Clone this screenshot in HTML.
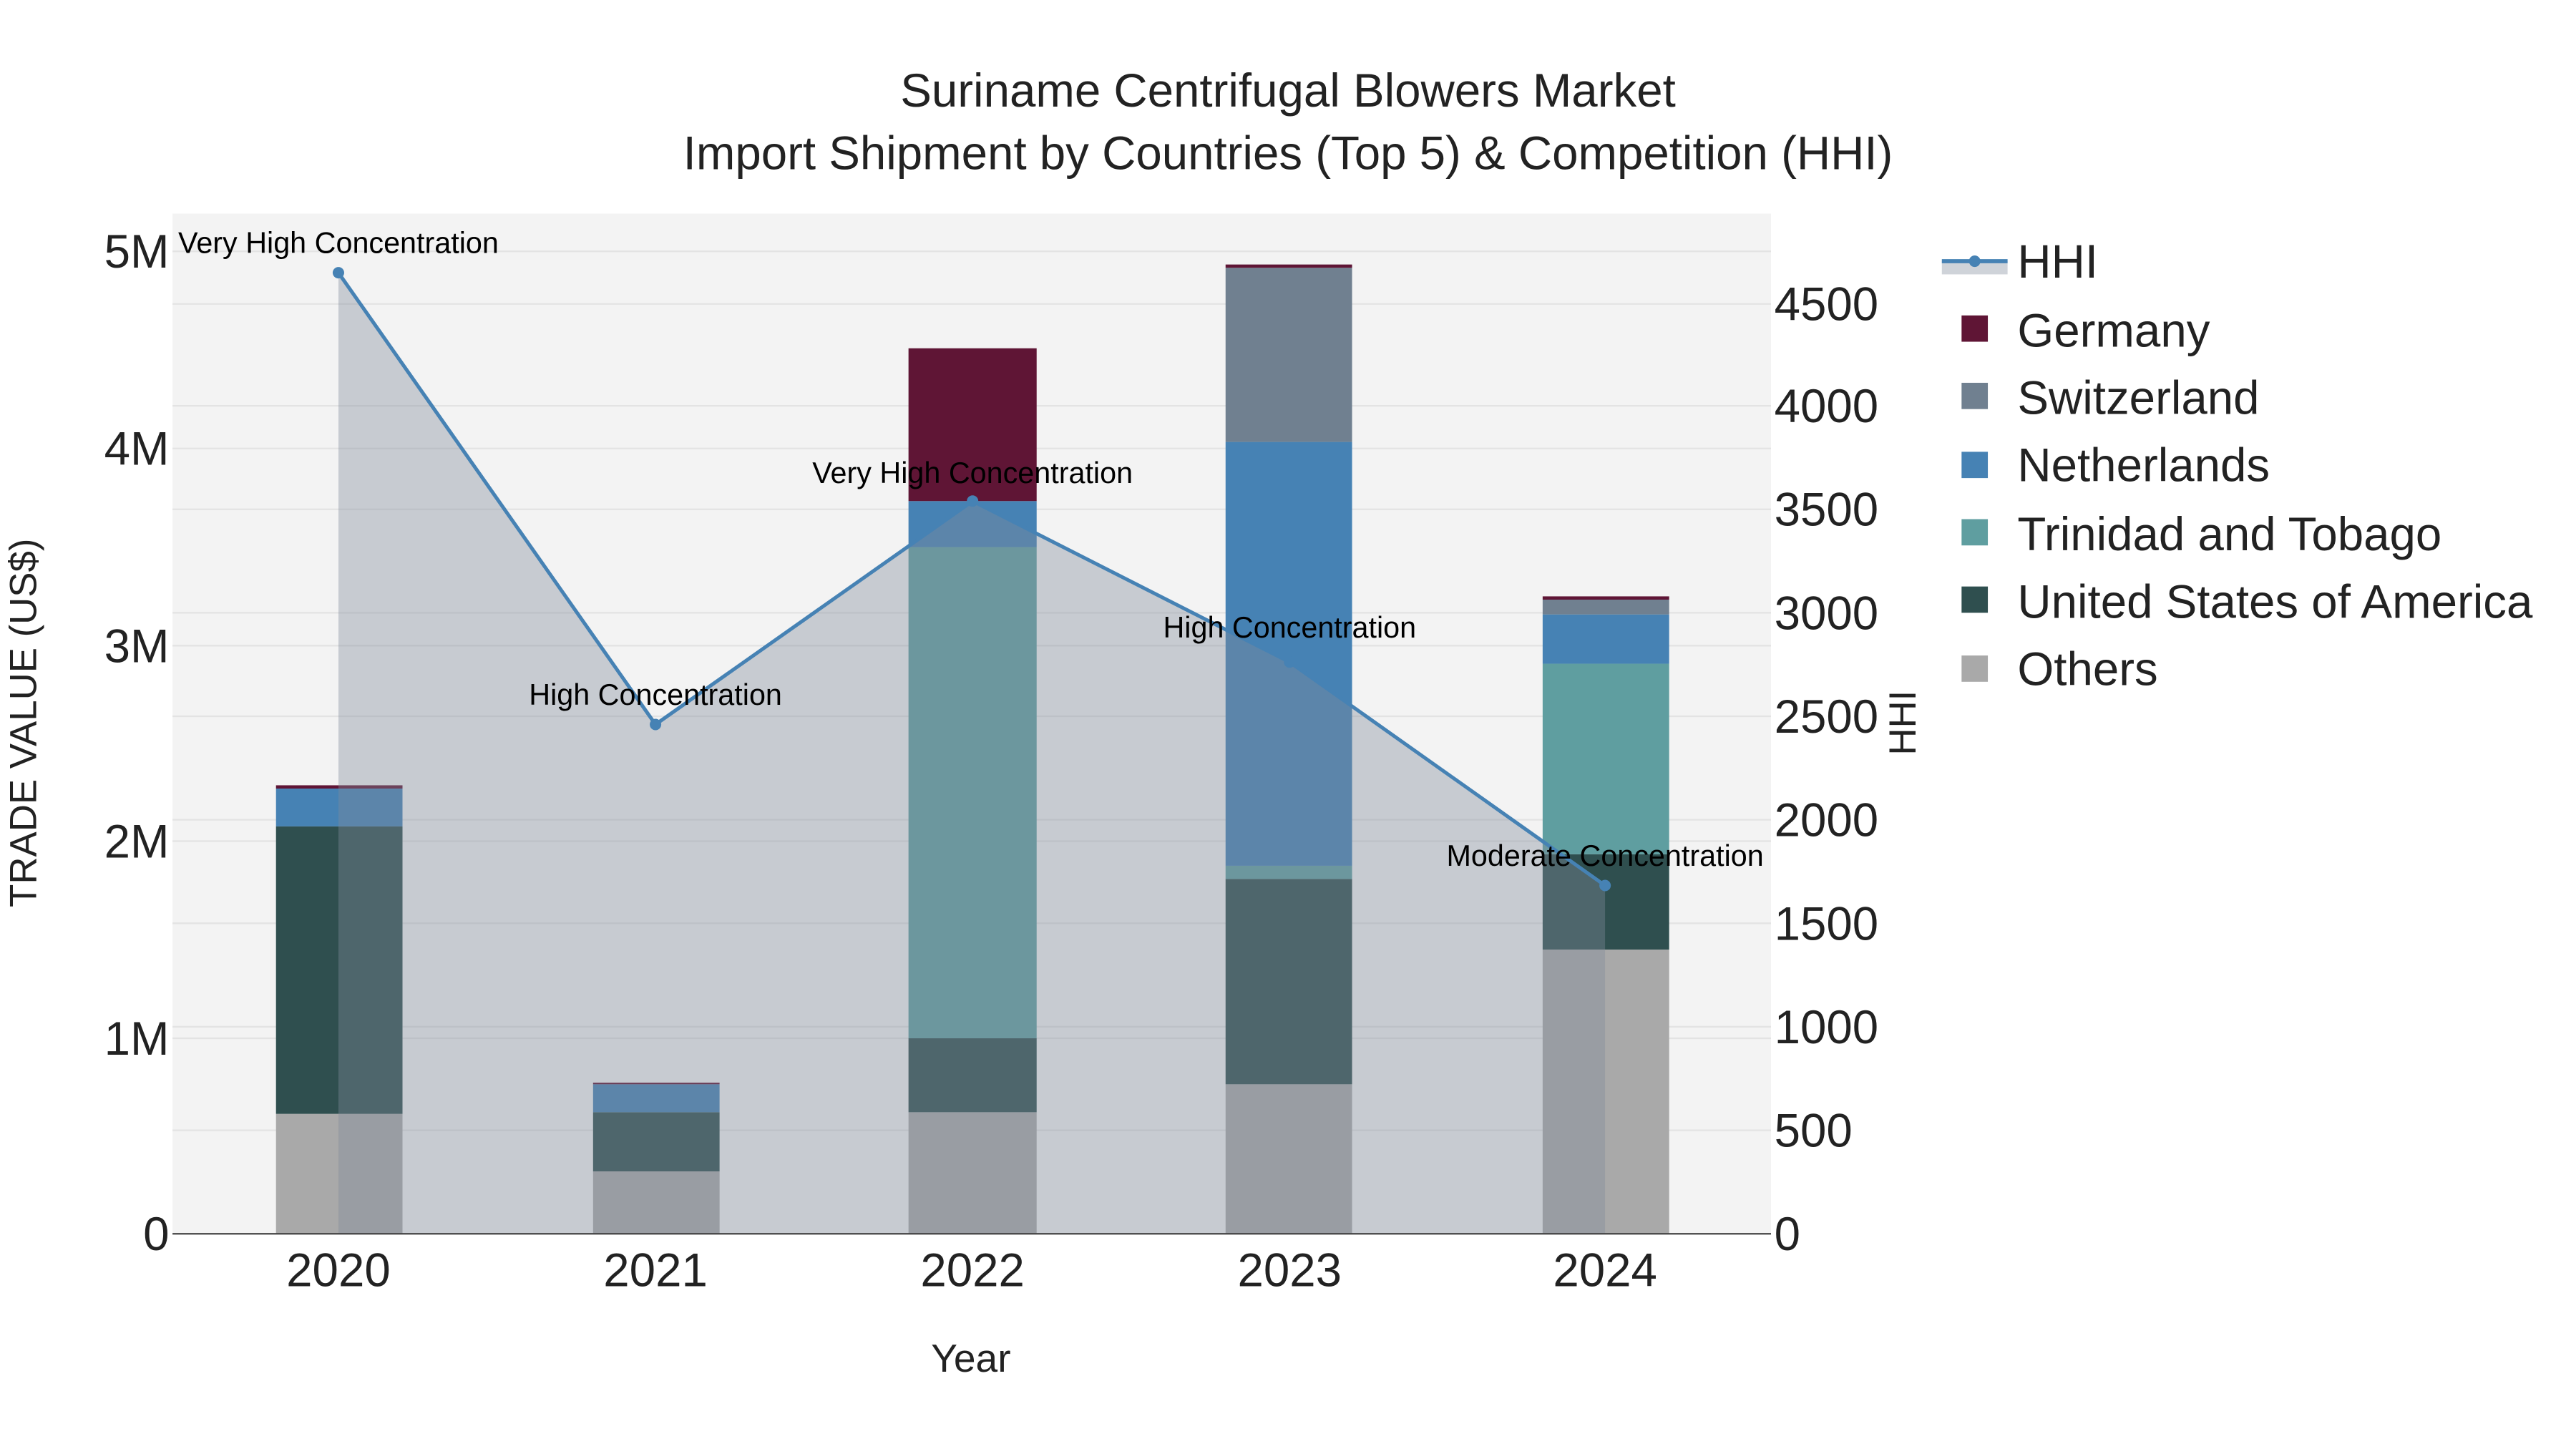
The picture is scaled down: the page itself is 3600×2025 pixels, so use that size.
<!DOCTYPE html>
<html><head><meta charset="utf-8"><style>html,body{margin:0;padding:0;background:#fff;}svg{display:block}</style></head>
<body>
<svg width="3600" height="2025" viewBox="0 0 1568 882" xmlns="http://www.w3.org/2000/svg" font-family="Liberation Sans, sans-serif">
<rect x="0" y="0" width="1568" height="882" fill="#fff"/>
<rect x="105" y="130" width="973" height="621" fill="#f3f3f3"/>
<g stroke="#e3e3e3" stroke-width="1">
<line x1="105" x2="1078" y1="632" y2="632"/><line x1="105" x2="1078" y1="512" y2="512"/><line x1="105" x2="1078" y1="393" y2="393"/><line x1="105" x2="1078" y1="273" y2="273"/><line x1="105" x2="1078" y1="153" y2="153"/>
<line x1="105" x2="1078" y1="688" y2="688"/><line x1="105" x2="1078" y1="625" y2="625"/><line x1="105" x2="1078" y1="562" y2="562"/><line x1="105" x2="1078" y1="499" y2="499"/><line x1="105" x2="1078" y1="436" y2="436"/><line x1="105" x2="1078" y1="373" y2="373"/><line x1="105" x2="1078" y1="310" y2="310"/><line x1="105" x2="1078" y1="247" y2="247"/><line x1="105" x2="1078" y1="185" y2="185"/>
</g>
<g>
<rect x="168" y="678" width="77" height="73" fill="#a9a9a9"/><rect x="168" y="503" width="77" height="175" fill="#2f4f4f"/><rect x="168" y="480" width="77" height="23" fill="#4682b4"/><rect x="168" y="478" width="77" height="2" fill="#5f1535"/>
<rect x="361" y="713" width="77" height="38" fill="#a9a9a9"/><rect x="361" y="677" width="77" height="36" fill="#2f4f4f"/><rect x="361" y="660" width="77" height="17" fill="#4682b4"/><rect x="361" y="659" width="77" height="1" fill="#5f1535"/>
<rect x="553" y="677" width="78" height="74" fill="#a9a9a9"/><rect x="553" y="632" width="78" height="45" fill="#2f4f4f"/><rect x="553" y="333" width="78" height="299" fill="#5f9ea0"/><rect x="553" y="305" width="78" height="28" fill="#4682b4"/><rect x="553" y="212" width="78" height="93" fill="#5f1535"/>
<rect x="746" y="660" width="77" height="91" fill="#a9a9a9"/><rect x="746" y="535" width="77" height="125" fill="#2f4f4f"/><rect x="746" y="527" width="77" height="8" fill="#5f9ea0"/><rect x="746" y="269" width="77" height="258" fill="#4682b4"/><rect x="746" y="163" width="77" height="106" fill="#708090"/><rect x="746" y="161" width="77" height="2" fill="#5f1535"/>
<rect x="939" y="578" width="77" height="173" fill="#a9a9a9"/><rect x="939" y="520" width="77" height="58" fill="#2f4f4f"/><rect x="939" y="404" width="77" height="116" fill="#5f9ea0"/><rect x="939" y="374" width="77" height="30" fill="#4682b4"/><rect x="939" y="365" width="77" height="9" fill="#708090"/><rect x="939" y="363" width="77" height="2" fill="#5f1535"/>
</g>
<polygon points="206,166 399,441 592,305 785,403 977,539 977,751 206,751" fill="rgb(130,140,155)" fill-opacity="0.38"/>
<polyline points="206,166 399,441 592,305 785,403 977,539" fill="none" stroke="#4682b4" stroke-width="2.2"/>
<g fill="#4682b4"><circle cx="206" cy="166" r="3.5"/><circle cx="399" cy="441" r="3.5"/><circle cx="592" cy="305" r="3.5"/><circle cx="785" cy="403" r="3.5"/><circle cx="977" cy="539" r="3.5"/></g>
<line x1="105" x2="1078" y1="751" y2="751" stroke="#444" stroke-width="1"/>
<g font-size="18" fill="#000" text-anchor="middle">
<text x="206" y="154">Very High Concentration</text>
<text x="399" y="429">High Concentration</text>
<text x="592" y="294">Very High Concentration</text>
<text x="785" y="388">High Concentration</text>
<text x="977" y="527">Moderate Concentration</text>
</g>
<g font-size="28.5" fill="#222" text-anchor="end">
<text x="103" y="761">0</text><text x="103" y="642">1M</text><text x="103" y="522">2M</text><text x="103" y="403">3M</text><text x="103" y="283">4M</text><text x="103" y="163">5M</text>
</g>
<g font-size="28.5" fill="#222" text-anchor="start">
<text x="1080" y="761">0</text><text x="1080" y="698">500</text><text x="1080" y="635">1000</text><text x="1080" y="572">1500</text><text x="1080" y="509">2000</text><text x="1080" y="446">2500</text><text x="1080" y="383">3000</text><text x="1080" y="320">3500</text><text x="1080" y="257">4000</text><text x="1080" y="195">4500</text>
</g>
<g font-size="28.5" fill="#222" text-anchor="middle">
<text x="206" y="783">2020</text><text x="399" y="783">2021</text><text x="592" y="783">2022</text><text x="785" y="783">2023</text><text x="977" y="783">2024</text>
</g>
<text x="591" y="835" font-size="24" fill="#222" text-anchor="middle">Year</text>
<text transform="translate(22,440) rotate(-90)" font-size="23" fill="#222" text-anchor="middle">TRADE VALUE (US$)</text>
<text transform="translate(1166,440) rotate(-90)" font-size="23" fill="#222" text-anchor="middle">HHI</text>
<g font-size="28.5" fill="#222" text-anchor="middle">
<text x="784" y="65">Suriname Centrifugal Blowers Market</text>
<text x="784" y="103">Import Shipment by Countries (Top 5) &amp; Competition (HHI)</text>
</g>
<rect x="1182" y="159" width="40" height="8" fill="rgb(130,140,155)" fill-opacity="0.38"/>
<line x1="1182" x2="1222" y1="159" y2="159" stroke="#4682b4" stroke-width="2.5"/><circle cx="1202" cy="159" r="3.5" fill="#4682b4"/>
<rect x="1194" y="192" width="16" height="16" fill="#5f1535"/>
<rect x="1194" y="233" width="16" height="16" fill="#708090"/>
<rect x="1194" y="275" width="16" height="16" fill="#4682b4"/>
<rect x="1194" y="316" width="16" height="16" fill="#5f9ea0"/>
<rect x="1194" y="357" width="16" height="16" fill="#2f4f4f"/>
<rect x="1194" y="399" width="16" height="16" fill="#a9a9a9"/>
<g font-size="28.5" fill="#222">
<text x="1228" y="169">HHI</text><text x="1228" y="211">Germany</text><text x="1228" y="252">Switzerland</text><text x="1228" y="293">Netherlands</text><text x="1228" y="335">Trinidad and Tobago</text><text x="1228" y="376">United States of America</text><text x="1228" y="417">Others</text>
</g>
</svg>
</body></html>
